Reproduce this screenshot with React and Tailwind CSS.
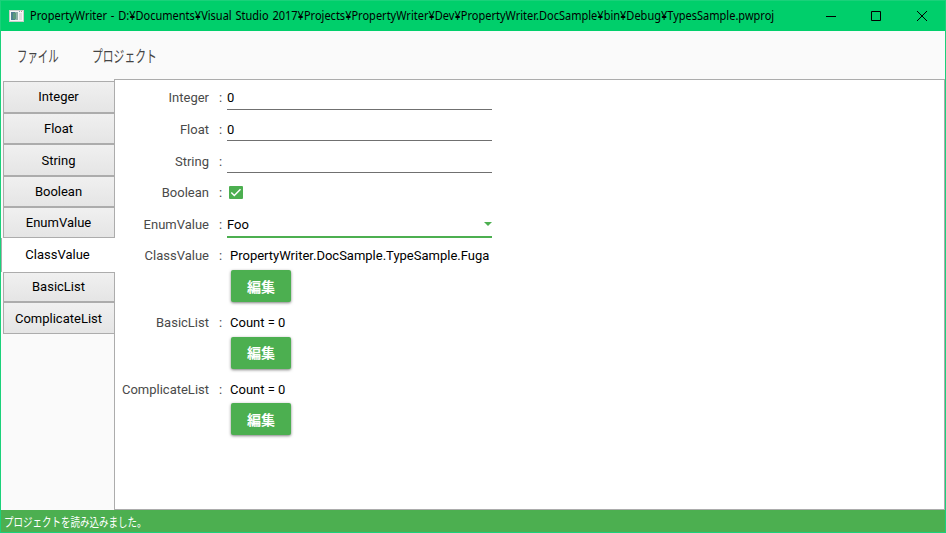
const TABS = [
  { name: 'Integer', box: 'h-8' },
  { name: 'Float', box: 'h-[31px]' },
  { name: 'String', box: 'h-8 pt-px' },
  { name: 'Boolean', box: 'h-[31px]' },
  { name: 'EnumValue', box: 'h-[31px] pt-px' },
  { name: 'ClassValue', selected: true },
  { name: 'BasicList', box: 'h-[30px]' },
  { name: 'ComplicateList', box: 'h-8 pt-px' },
];

function AppIcon() {
  return (
    <svg width="15" height="12" viewBox="0 0 15 12" className="shrink-0" shapeRendering="crispEdges">
      <rect width="15" height="12" fill="#c9cdca" />
      <rect x="1" y="1" width="13" height="10" fill="#f6f6f6" />
      <rect x="2" y="2" width="7" height="8" fill="#8fb0a8" />
      <rect x="2" y="2" width="4" height="8" fill="#4f7f90" />
      <rect x="4" y="3" width="3" height="6" fill="#5b9a7c" />
      <rect x="10" y="3" width="3" height="7" fill="#dedede" />
      <rect x="10" y="1" width="1" height="1" fill="#8aa3b8" />
      <rect x="12" y="1" width="1" height="1" fill="#b98c86" />
    </svg>
  );
}

function TitleBar() {
  return (
    <header className="flex h-[30px] shrink-0 items-center bg-[#00cf6b] pl-2">
      <AppIcon />
      <div className="ml-[6px] w-[770px] whitespace-nowrap text-black">
        <span className="inline-block origin-left scale-x-[0.918] font-['Noto_Sans',sans-serif] text-[12px] leading-[30px] [word-spacing:1px]">
          PropertyWriter - D:¥Documents¥Visual Studio 2017¥Projects¥PropertyWriter¥Dev¥PropertyWriter.DocSample¥bin¥Debug¥TypesSample.pwproj
        </span>
      </div>
      <svg width="108" height="12" viewBox="0 0 108 12" className="ml-[25px] shrink-0" fill="none" stroke="#000">
        <path d="M1 6.5h10" />
        <path d="M46.5 1.5h9v9h-9z" />
        <path d="M92 1l10 10M102 1L92 11" />
      </svg>
    </header>
  );
}

function MenuBar() {
  return (
    <nav className="flex h-12 shrink-0 font-['Noto_Sans_CJK_JP',sans-serif] text-[16px] leading-[48px] text-[#444]">
      <div className="w-[75px] whitespace-nowrap pl-4">
        <span className="inline-block origin-left scale-x-[0.65]">ファイル</span>
      </div>
      <div className="w-[100px] whitespace-nowrap pl-4">
        <span className="inline-block origin-left scale-x-[0.675]">プロジェクト</span>
      </div>
    </nav>
  );
}

function Tab({ name, box, selected }) {
  if (selected) {
    return (
      <div className="z-10 flex h-[34px] w-[114px] items-center justify-center border-l border-[#acacac] bg-white pr-[2px]">
        {name}
      </div>
    );
  }
  return (
    <div
      className={`ml-[2px] flex w-[112px] items-center justify-center border border-[#acacac] bg-linear-to-b from-[#f0f0f0] to-[#e5e5e5] pr-px ${box}`}
    >
      {name}
    </div>
  );
}

function Row({ label, box, lead, children }) {
  return (
    <div className={`flex ${box}`}>
      <div className={`w-[94px] text-right text-[#4a4a4a] ${lead}`}>{label}</div>
      <div className={`w-[18px] pl-[10px] text-[#4a4a4a] ${lead}`}>:</div>
      <div className="w-[265px] text-black">{children}</div>
    </div>
  );
}

function ObjectValue({ text, gap, lead }) {
  return (
    <div className="pl-[3px]">
      <div className={`whitespace-nowrap leading-[30px] ${gap}`}>{text}</div>
      <button className="ml-px block h-8 w-[60px] rounded-[2px] bg-[#4caf50] font-['Noto_Sans_CJK_JP',sans-serif] text-[14px] font-bold text-white shadow-[0_1px_3px_rgba(0,0,0,0.5)]">
        <span className={`block h-8 ${lead}`}>編集</span>
      </button>
    </div>
  );
}

export default function App() {
  return (
    <div className="flex h-[533px] w-[946px] flex-col border border-[#1ad17a] bg-[#fafafa] font-[Roboto,sans-serif] text-[13px]">
      <TitleBar />
      <MenuBar />
      <main className="flex h-[431px] shrink-0">
        <aside className="flex w-[113px] shrink-0 flex-col pt-[2px] text-black">
          {TABS.map((tab) => (
            <Tab key={tab.name} {...tab} />
          ))}
        </aside>
        <section className="w-[831px] border border-[#acacac] bg-white pt-[2px]">
          <Row label="Integer" box="h-8" lead="leading-8">
            <div className="h-7 border-b border-[#707070] leading-8">0</div>
          </Row>
          <Row label="Float" box="h-8" lead="leading-8">
            <div className="h-[27px] border-b border-[#707070] leading-8">0</div>
          </Row>
          <Row label="String" box="h-8" lead="leading-8">
            <div className="h-[27px] border-b border-[#707070]" />
          </Row>
          <Row label="Boolean" box="h-[31px]" lead="leading-[30px]">
            <svg width="14" height="13" viewBox="0 0 14 13" className="ml-[2px] mt-2">
              <rect width="14" height="13" rx="1" fill="#4caf50" />
              <path d="M2.3 6.5l3 3 6.2-6.2" fill="none" stroke="#fff" strokeWidth="1.5" />
            </svg>
          </Row>
          <Row label="EnumValue" box="h-8" lead="leading-8">
            <div className="flex h-[29px] justify-between border-b-2 border-[#4caf50] leading-8">
              <span>Foo</span>
              <svg width="8" height="4" viewBox="0 0 8 4" className="mt-[13px]">
                <path d="M0 0h8L4 4z" fill="#4caf50" />
              </svg>
            </div>
          </Row>
          <Row label="ClassValue" box="h-[67px]" lead="leading-[30px]">
            <ObjectValue text="PropertyWriter.DocSample.TypeSample.Fuga" gap="h-[29px]" lead="leading-8" />
          </Row>
          <Row label="BasicList" box="h-[67px]" lead="leading-[30px]">
            <ObjectValue text="Count = 0" gap="h-[29px]" lead="leading-[30px]" />
          </Row>
          <Row label="ComplicateList" box="h-[67px]" lead="leading-[30px]">
            <ObjectValue text="Count = 0" gap="h-7" lead="leading-8" />
          </Row>
        </section>
      </main>
      <footer className="h-[22px] shrink-0 whitespace-nowrap bg-[#4caf50] pl-[3px] font-['Noto_Sans_CJK_JP',sans-serif] text-[12.5px] leading-[23px] text-white">
        <span className="inline-block origin-left scale-x-[0.76]">プロジェクトを読み込みました。</span>
      </footer>
    </div>
  );
}
